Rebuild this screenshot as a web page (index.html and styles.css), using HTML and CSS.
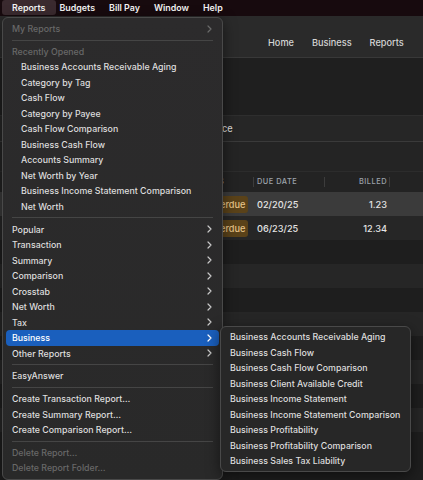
FILE: index.html
```html
<!DOCTYPE html>
<html lang="en">

<head>
  <meta charset="UTF-8" />
  <title>Reports Menu</title>
  <link rel="stylesheet" href="styles.css">
</head>

<body>
  <div id="menuBar">
    <div class="barItem active">Reports</div>
    <div class="barItem">Budgets</div>
    <div class="barItem">Bill Pay</div>
    <div class="barItem">Window</div>
    <div class="barItem">Help</div>
  </div>

  <div id="appWindow">
    <div id="toolbar">
      <span class="navItem">Home</span>
      <span class="navItem">Business</span>
      <span class="navItem">Reports</span>
    </div>
    <div id="summaryPanel"></div>
    <div id="titleRow">ce</div>
    <div id="filterRow"></div>
    <div class="tableHeader">
      <div class="colStatus">S</div>
      <div class="colDate">DUE DATE</div>
      <div class="colBilled">BILLED</div>
    </div>
    <div class="tableRow selected">
      <div class="colStatus"><span class="badge">erdue</span></div>
      <div class="colDate">02/20/25</div>
      <div class="colBilled">1.23</div>
    </div>
    <div class="tableRow">
      <div class="colStatus"><span class="badge">erdue</span></div>
      <div class="colDate">06/23/25</div>
      <div class="colBilled">12.34</div>
    </div>
    <div class="stripe"></div>
    <div class="stripe odd"></div>
    <div class="stripe"></div>
    <div class="stripe odd"></div>
    <div class="stripe"></div>
    <div class="stripe odd"></div>
    <div class="stripe"></div>
    <div class="stripe odd"></div>
    <div class="stripe"></div>
  </div>

  <div id="reportsMenu" class="menu">
    <div class="menuItem disabled">My Reports<svg class="chevron" viewBox="0 0 5 8"><polyline points="1,1 4,4 1,7" /></svg></div>
    <div class="separator"></div>
    <div class="menuItem disabled">Recently Opened</div>
    <div class="menuItem indent">Business Accounts Receivable Aging</div>
    <div class="menuItem indent">Category by Tag</div>
    <div class="menuItem indent">Cash Flow</div>
    <div class="menuItem indent">Category by Payee</div>
    <div class="menuItem indent">Cash Flow Comparison</div>
    <div class="menuItem indent">Business Cash Flow</div>
    <div class="menuItem indent">Accounts Summary</div>
    <div class="menuItem indent">Net Worth by Year</div>
    <div class="menuItem indent">Business Income Statement Comparison</div>
    <div class="menuItem indent">Net Worth</div>
    <div class="separator"></div>
    <div class="menuItem">Popular<svg class="chevron" viewBox="0 0 5 8"><polyline points="1,1 4,4 1,7" /></svg></div>
    <div class="menuItem">Transaction<svg class="chevron" viewBox="0 0 5 8"><polyline points="1,1 4,4 1,7" /></svg></div>
    <div class="menuItem">Summary<svg class="chevron" viewBox="0 0 5 8"><polyline points="1,1 4,4 1,7" /></svg></div>
    <div class="menuItem">Comparison<svg class="chevron" viewBox="0 0 5 8"><polyline points="1,1 4,4 1,7" /></svg></div>
    <div class="menuItem">Crosstab<svg class="chevron" viewBox="0 0 5 8"><polyline points="1,1 4,4 1,7" /></svg></div>
    <div class="menuItem">Net Worth<svg class="chevron" viewBox="0 0 5 8"><polyline points="1,1 4,4 1,7" /></svg></div>
    <div class="menuItem">Tax<svg class="chevron" viewBox="0 0 5 8"><polyline points="1,1 4,4 1,7" /></svg></div>
    <div class="menuItem highlighted">Business<svg class="chevron" viewBox="0 0 5 8"><polyline points="1,1 4,4 1,7" /></svg></div>
    <div class="menuItem">Other Reports<svg class="chevron" viewBox="0 0 5 8"><polyline points="1,1 4,4 1,7" /></svg></div>
    <div class="separator"></div>
    <div class="menuItem">EasyAnswer</div>
    <div class="separator"></div>
    <div class="menuItem">Create Transaction Report…</div>
    <div class="menuItem">Create Summary Report…</div>
    <div class="menuItem">Create Comparison Report…</div>
    <div class="separator"></div>
    <div class="menuItem disabled">Delete Report…</div>
    <div class="menuItem disabled">Delete Report Folder…</div>
  </div>

  <div id="businessMenu" class="menu">
    <div class="menuItem">Business Accounts Receivable Aging</div>
    <div class="menuItem">Business Cash Flow</div>
    <div class="menuItem">Business Cash Flow Comparison</div>
    <div class="menuItem">Business Client Available Credit</div>
    <div class="menuItem">Business Income Statement</div>
    <div class="menuItem">Business Income Statement Comparison</div>
    <div class="menuItem">Business Profitability</div>
    <div class="menuItem">Business Profitability Comparison</div>
    <div class="menuItem">Business Sales Tax Liability</div>
  </div>
</body>

</html>
```

FILE: styles.css
```css
html {
  background: #1e1e1e;
}

body {
  margin: 0;
  padding: 0;
  width: 423px;
  height: 480px;
  overflow: hidden;
  position: relative;
  background: #1e1e1e;
  font-family: "Inter", "Liberation Sans", sans-serif;
  font-size: 8.8px;
  font-weight: 500;
  color: #dcdcdc;
}

#menuBar {
  height: 16px;
  background: #170a0e;
  display: flex;
  align-items: stretch;
  padding-left: 2px;
}

.barItem {
  padding: 0 7px;
  line-height: 16px;
  font-size: 8.9px;
  color: #f2f2f2;
  font-weight: 600;
}

.barItem.active {
  background: #3a2a2f;
  padding: 0 10px;
  margin-right: -3px;
  border-radius: 3px;
  line-height: 15px;
  height: 15px;
}

#appWindow {
  display: flex;
  flex-direction: column;
}

#toolbar {
  height: 42px;
  background: #2a2a2a;
  border-bottom: 1px solid #383838;
  display: flex;
  align-items: flex-end;
  padding-left: 268px;
  box-sizing: border-box;
  gap: 18px;
}

.navItem {
  color: #d4d4d4;
  font-size: 9.2px;
  line-height: 12px;
  margin-bottom: 8px;
}

#summaryPanel {
  height: 57px;
  background: #1f1f1f;
  border-bottom: 1px solid #2e2e2e;
}

#titleRow {
  height: 25px;
  background: #262626;
  border-bottom: 1px solid #3a3a3a;
  line-height: 25px;
  padding-left: 222px;
  font-size: 9.2px;
  color: #d8d8d8;
}

#filterRow {
  height: 29px;
  background: #242424;
  border-bottom: 1px solid #2c2c2c;
}

.tableHeader,
.tableRow {
  display: flex;
  align-items: center;
  padding-left: 219px;
}

.tableHeader {
  height: 20px;
  background: #232323;
  font-size: 7.4px;
  letter-spacing: 0.5px;
  color: #9ea3ab;
}

.tableHeader > div {
  border-right: 1px solid #3c3c3c;
  line-height: 10px;
}

.tableRow {
  height: 24px;
  background: #262626;
  font-size: 9.2px;
  color: #e4e4e4;
}

.tableRow.selected {
  background: #3b3b3b;
}

.colStatus {
  width: 34px;
}

.colDate {
  width: 67px;
  padding-left: 3px;
}

.colBilled {
  width: 62px;
  text-align: right;
  padding-right: 2px;
}

.tableRow .colStatus,
.tableRow .colDate {
  border-right: 1px solid transparent;
}

.badge {
  display: inline-block;
  background: #5a4219;
  color: #e6c48a;
  border-radius: 0 3px 3px 0;
  padding: 3px 3px 3px 1px;
  line-height: 11px;
}

.stripe {
  height: 24px;
  background: #1e1e1e;
}

.stripe.odd {
  background: #262626;
}

.menu {
  position: absolute;
  background: #2b2a2b;
  border: 1px solid #494949;
  border-radius: 6px;
  box-shadow: 0 4px 14px rgba(0, 0, 0, 0.5);
  box-sizing: border-box;
}

#reportsMenu {
  left: 2px;
  top: 17px;
  width: 221px;
  padding: 3px 3px;
  background: linear-gradient(to bottom, #2c2b2c, #292929);
}

#businessMenu {
  left: 220px;
  top: 326px;
  width: 191px;
  padding: 2px 3px;
  background: #272727;
  z-index: 2;
}

.menuItem {
  height: 15.5px;
  line-height: 15.5px;
  padding: 0 7px 0 6px;
  border-radius: 4px;
  display: flex;
  justify-content: space-between;
  align-items: center;
  white-space: nowrap;
  color: #dedede;
}

.menuItem.indent {
  padding-left: 15px;
}

.menuItem.disabled {
  color: #686868;
}

.menuItem.highlighted {
  background: #1a5fbd;
  color: #ffffff;
}

.chevron {
  width: 5px;
  height: 8px;
  fill: none;
  stroke: #c8c8c8;
  stroke-width: 1.2;
  stroke-linecap: round;
  stroke-linejoin: round;
}

.menuItem.highlighted .chevron {
  stroke: #ffffff;
}

.menuItem.disabled .chevron {
  stroke: #6a6a6a;
}

.separator {
  height: 1px;
  margin: 3px 6px 3.25px;
  background: #454545;
}
```
